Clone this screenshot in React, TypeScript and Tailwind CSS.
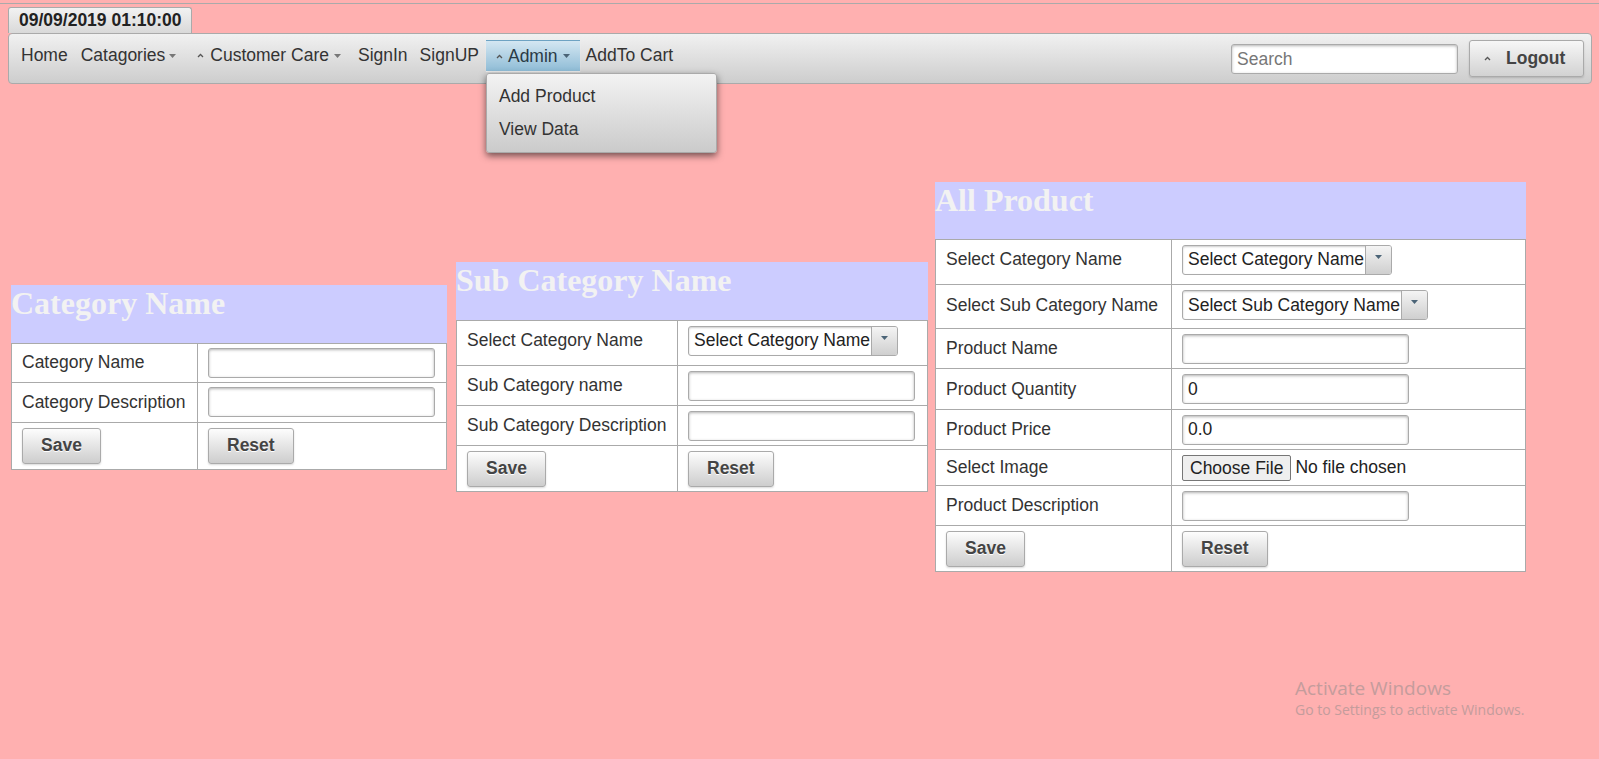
import React from 'react';

const inputCls =
  'h-[30px] w-[227px] rounded-[3px] border border-[#aaa] bg-white px-[5px] text-[17.5px] text-[#222] shadow-[inset_0_1px_3px_rgba(0,0,0,0.3)] outline-none placeholder-[#777]';
const btnCls =
  'h-[36px] rounded-[3px] border border-[#aaa] bg-linear-to-b from-[#fdfdfd] to-[#cdcdcd] px-[18px] text-[17.5px] font-bold text-[#444] [text-shadow:0_1px_0_#fff] shadow-[0_1px_2px_rgba(0,0,0,0.15)]';

function ChevronUp() {
  return (
    <svg width="7" height="5" viewBox="0 0 7 5" className="shrink-0">
      <polyline points="1,4 3.5,1.5 6,4" fill="none" stroke="#555" strokeWidth="1.3" />
    </svg>
  );
}

function Caret({ color = '#777' }: { color?: string }) {
  return (
    <svg width="7" height="4" viewBox="0 0 7 4" className="shrink-0">
      <polygon points="0,0 7,0 3.5,4" fill={color} />
    </svg>
  );
}

function FakeSelect({ text }: { text: string }) {
  return (
    <div className="inline-flex h-[30px] overflow-hidden rounded-[3px] border border-[#aaa] bg-white shadow-[inset_0_1px_2px_rgba(0,0,0,0.2)]">
      <span className="flex items-center pl-[5px] pr-[1px] text-[17.5px] text-[#222]">{text}</span>
      <span className="flex w-[26px] justify-center border-l border-[#aaa] bg-linear-to-b from-[#f4f4f4] to-[#cfcfcf] pt-[9px]">
        <Caret color="#4b6477" />
      </span>
    </div>
  );
}

type Row = { label?: React.ReactNode; field: React.ReactNode; h: string; pad?: string };

function FormTable({
  title,
  width,
  col,
  head,
  rows,
  ml,
}: {
  title: string;
  width: string;
  col: string;
  head: string;
  rows: Row[];
  ml: string;
}) {
  return (
    <div className={`${width} ${ml} shrink-0`}>
      <div
        className={`${head} bg-[#ccccff] font-['Liberation_Serif','Times_New_Roman',serif] text-[32px] leading-[37px] font-bold text-[#f2f2f2]`}
      >
        {title}
      </div>
      <div className="border border-[#aaa] bg-white">
        {rows.map((r, i) => (
          <div key={i} className={`flex ${r.h} ${i < rows.length - 1 ? 'border-b border-[#aaa]' : ''}`}>
            <div className={`${col} ${r.pad ?? ''} flex shrink-0 items-center border-r border-[#aaa] pl-[10px]`}>
              {r.label}
            </div>
            <div className={`${r.pad ?? ''} flex flex-1 items-center pl-[10px]`}>{r.field}</div>
          </div>
        ))}
      </div>
    </div>
  );
}

export default function App() {
  const save = <button className={btnCls}>Save</button>;
  const reset = <button className={btnCls}>Reset</button>;

  return (
    <div className="relative min-h-screen bg-[#ffb0b0] font-['Liberation_Sans',Arial,sans-serif] text-[17.5px] text-[#333]">
      <div className="pt-[3px]">
        <div className="h-px bg-[#aaa]" />
      </div>

      {/* header */}
      <div className="ml-[8px] mr-[7px] pt-[3px]">
        <div className="flex h-[26px] w-[184px] items-center rounded-t-[3px] border border-b-0 border-[#aaa] bg-linear-to-b from-[#f2f2f2] to-[#d9d9d9] pl-[10px] font-bold text-[#222]">
          09/09/2019 01:10:00
        </div>
        <nav className="flex h-[51px] justify-between rounded-[4px] border border-[#aaa] bg-linear-to-b from-[#f1f1f1] to-[#cdcdcd]">
          <div className="flex items-start pl-[6px] pt-[6px]">
            <a className="flex h-[31px] items-center px-[6px]">Home</a>
            <a className="flex h-[31px] items-center gap-[4px] pl-[7px] pr-[11px]">
              Catagories <Caret />
            </a>
            <a className="flex h-[31px] items-center pl-[10px] pr-[11px]">
              <ChevronUp />
              <span className="ml-[6px]">Customer Care</span>
              <span className="ml-[5px]">
                <Caret />
              </span>
            </a>
            <a className="flex h-[31px] items-center px-[6px]">SignIn</a>
            <a className="flex h-[31px] items-center pl-[6px] pr-[7px]">SignUP</a>
            <div className="relative">
              <a className="flex h-[31px] items-center border-t border-[#6ea3c3] bg-linear-to-b from-[#d4e7f2] to-[#8fbcd6] pl-[10px] pr-[10px] text-[#2a3a45] shadow-[0_1px_1px_rgba(255,255,255,0.5)]">
                <ChevronUp />
                <span className="ml-[5px]">Admin</span>
                <span className="ml-[5px]">
                  <Caret color="#4b6477" />
                </span>
              </a>
              <div className="absolute left-0 top-[33px] z-10 h-[80px] w-[231px] rounded-[3px] border border-[#aaa] bg-linear-to-b from-[#f3f3f3] to-[#cbcbcb] pt-[6px] shadow-[0_3px_7px_rgba(0,0,0,0.55)]">
                <div className="flex h-[33px] items-center pl-[12px]">Add Product</div>
                <div className="flex h-[33px] items-center pl-[12px]">View Data</div>
              </div>
            </div>
            <a className="flex h-[31px] items-center px-[6px]">AddTo Cart</a>
          </div>
          <div className="flex items-start gap-[11px] pr-[7px] pt-[6px]">
            <input className={`${inputCls} mt-[4px]`} placeholder="Search" />
            <button className="flex h-[37px] w-[115px] items-center rounded-[3px] border border-[#aaa] bg-linear-to-b from-[#f7f7f7] to-[#d2d2d2] pl-[14px] font-bold text-[#444] shadow-[0_1px_2px_rgba(0,0,0,0.15)]">
              <ChevronUp />
              <span className="ml-[15px]">Logout</span>
            </button>
          </div>
        </nav>
      </div>

      {/* forms */}
      <main className="mt-[98px] flex items-center pl-[11px]">
        <FormTable
          title="Category Name"
          width="w-[436px]"
          col="w-[186px]"
          head="h-[58px]"
          ml="ml-0"
          rows={[
            { label: 'Category Name', field: <input className={inputCls} />, h: 'h-[39px]' },
            { label: 'Category Description', field: <input className={inputCls} />, h: 'h-[40px]' },
            { label: save, field: reset, h: 'h-[46px]' },
          ]}
        />
        <FormTable
          title="Sub Category Name"
          width="w-[472px]"
          col="w-[221px]"
          head="h-[58px]"
          ml="ml-[9px]"
          rows={[
            { label: 'Select Category Name', field: <FakeSelect text="Select Category Name" />, h: 'h-[45px]', pad: 'pb-[5px]' },
            { label: 'Sub Category name', field: <input className={inputCls} />, h: 'h-[40px]' },
            { label: 'Sub Category Description', field: <input className={inputCls} />, h: 'h-[40px]' },
            { label: save, field: reset, h: 'h-[45px]' },
          ]}
        />
        <FormTable
          title="All Product"
          width="w-[591px]"
          col="w-[236px]"
          head="h-[57px]"
          ml="ml-[7px]"
          rows={[
            { label: 'Select Category Name', field: <FakeSelect text="Select Category Name" />, h: 'h-[45px]', pad: 'pb-[5px]' },
            { label: 'Select Sub Category Name', field: <FakeSelect text="Select Sub Category Name" />, h: 'h-[44px]', pad: 'pb-[3px]' },
            { label: 'Product Name', field: <input className={inputCls} />, h: 'h-[40px]' },
            { label: 'Product Quantity', field: <input className={inputCls} defaultValue="0" />, h: 'h-[41px]' },
            { label: 'Product Price', field: <input className={inputCls} defaultValue="0.0" />, h: 'h-[40px]' },
            {
              label: 'Select Image',
              field: (
                <div className="flex items-center text-[#222]">
                  <span className="rounded-[2px] border border-[#767676] bg-[#efefef] px-[7px] py-[1px] leading-[22px]">
                    Choose File
                  </span>
                  <span className="ml-[4px]">No file chosen</span>
                </div>
              ),
              h: 'h-[36px]',
            },
            { label: 'Product Description', field: <input className={inputCls} />, h: 'h-[40px]' },
            { label: save, field: reset, h: 'h-[45px]' },
          ]}
        />
      </main>

      {/* windows watermark */}
      <div className="pointer-events-none absolute left-[1295px] top-[676px] font-['Open_Sans','Noto_Sans',sans-serif] text-[#c49c9c]">
        <div className="text-[19px] leading-[24px]">Activate Windows</div>
        <div className="text-[14px] leading-[20px]">Go to Settings to activate Windows.</div>
      </div>
    </div>
  );
}
